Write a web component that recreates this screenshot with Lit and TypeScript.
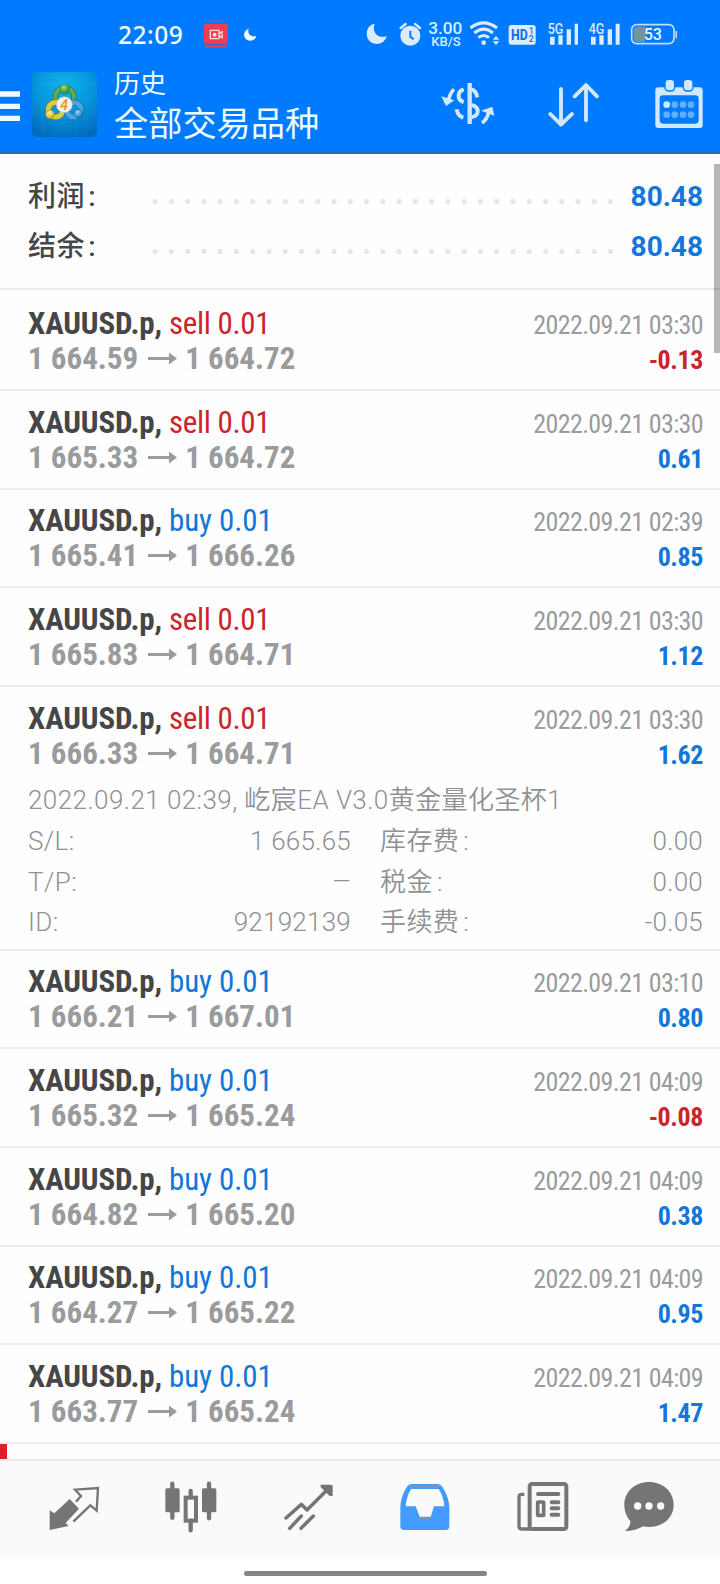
import { LitElement, html, svg, css, nothing } from "lit";
import { customElement, property } from "lit/decorators.js";

interface Trade {
  side: "sell" | "buy";
  open: string;
  close: string;
  time: string;
  profit: string;
  expanded?: boolean;
}

const TRADES: Trade[] = [
  { side: "sell", open: "1 664.59", close: "1 664.72", time: "2022.09.21 03:30", profit: "-0.13" },
  { side: "sell", open: "1 665.33", close: "1 664.72", time: "2022.09.21 03:30", profit: "0.61" },
  { side: "buy", open: "1 665.41", close: "1 666.26", time: "2022.09.21 02:39", profit: "0.85" },
  { side: "sell", open: "1 665.83", close: "1 664.71", time: "2022.09.21 03:30", profit: "1.12" },
  { side: "sell", open: "1 666.33", close: "1 664.71", time: "2022.09.21 03:30", profit: "1.62", expanded: true },
  { side: "buy", open: "1 666.21", close: "1 667.01", time: "2022.09.21 03:10", profit: "0.80" },
  { side: "buy", open: "1 665.32", close: "1 665.24", time: "2022.09.21 04:09", profit: "-0.08" },
  { side: "buy", open: "1 664.82", close: "1 665.20", time: "2022.09.21 04:09", profit: "0.38" },
  { side: "buy", open: "1 664.27", close: "1 665.22", time: "2022.09.21 04:09", profit: "0.95" },
  { side: "buy", open: "1 663.77", close: "1 665.24", time: "2022.09.21 04:09", profit: "1.47" },
];

/* Icons are drawn on a grid of three units per pixel. */
const icon = (x: number, y: number, w: number, h: number, body: unknown) => html`
  <svg width=${w / 3} height=${h / 3} viewBox="${x} ${y} ${w} ${h}" fill="none">${body}</svg>
`;

@customElement("status-bar")
class StatusBar extends LitElement {
  static styles = css`
    :host { display: flex; height: 30px; padding: 20px 43px 0 118px; color: #dcebff; font-family: Roboto, sans-serif; }
    svg { display: block; flex: none; }
    .time { width: 86px; font: 500 24.5px/29px "Noto Sans", sans-serif; letter-spacing: 0.5px; color: #f4faff; }
    .moon { margin-left: 16px; }
    .right { display: flex; margin-left: auto; gap: 7px; }
    .cell { display: block; margin-left: 2px; }
    .signal { margin-left: 1.300px; }
    text { font-family: Roboto, sans-serif; font-weight: 500; }
  `;
  signal(x: number, label: string) {
    return icon(x, 60, 98, 90, svg`
      <text x=${x + 5} y="101" font-size="43" fill="#dcebff" textLength="47" lengthAdjust="spacingAndGlyphs">${label}</text>
      <path fill="#dcebff" d="M${x + 12} 110h14v24h-14zM${x + 37} 106h13v28h-13zM${x + 62} 88h13v46h-13zM${x + 86} 71h12v63h-12z"/>`);
  }
  render() {
    return html`
      <span class="time">22:09</span>
      ${icon(612, 60, 72, 90, svg`
        <rect x="612" y="71" width="72" height="62" rx="8" fill="#ee3d52"/>
        <path d="M622 63h54" stroke="#8a60b0" stroke-width="3"/>
        <path d="M618 140h60" stroke="#ee3d52" stroke-width="5"/>
        <path d="M631 91h26v25h-26zM657 101l9-6v18l-9-6" stroke="#ffdce2" stroke-width="4"/>
        <circle cx="644" cy="104" r="6" fill="#ffdce2"/>`)}
      <span class="moon">${icon(734, 60, 38, 90, svg`<path fill="#f4faff" d="M748 86c-20 7-18 34 4 36 10 0 17-6 19-14-14 5-28-4-23-22z"/>`)}</span>
      <div class="right">
        ${icon(16, 60, 76, 90, svg`<path fill="#dcebff" d="M42 71C10 76 9 130 47 132c16 0 28-10 31-24-25 10-46-11-36-37z"/>`)}
        ${icon(113, 60, 66, 90, svg`
          <circle cx="147" cy="107" r="30" fill="#dcebff"/>
          <path d="M118 84l15-12M176 84l-15-12" stroke="#dcebff" stroke-width="7" stroke-linecap="round"/>
          <path d="M147 92v18l10 8" stroke="#007bff" stroke-width="6"/>`)}
        ${icon(199, 60, 105, 90, svg`
          <text x="200" y="103" font-size="47" fill="#dcebff" textLength="102" lengthAdjust="spacingAndGlyphs">3.00</text>
          <text x="209" y="138" font-size="38" fill="#dcebff" textLength="88" lengthAdjust="spacingAndGlyphs">KB/S</text>`)}
        ${icon(323, 60, 90, 90, svg`
          <path d="M324 84q40-31 80 0M336 99q28-23 56 0M348 113q16-13 32 0" stroke="#dcebff" stroke-width="9"/>
          <circle cx="364" cy="128" r="7" fill="#dcebff"/>
          <path d="M391 119l10-11 10 11zM391 124l10 11 10-11z" fill="#dcebff"/>`)}
        ${icon(436, 60, 92, 90, svg`
          <rect x="441" y="75" width="81" height="59" rx="8" fill="#dcebff"/>
          <text x="448" y="119" font-size="42" fill="#0870e0" style="font-weight:700" textLength="50" lengthAdjust="spacingAndGlyphs">HD</text>
          <text x="502" y="102" font-size="25" fill="#0870e0">1</text>
          <text x="501" y="127" font-size="27" fill="#0870e0">2</text>`)}
        <span class="cell signal">${this.signal(556, "5G")}</span>
        <span class="cell">${this.signal(685, "4G")}</span>
        <span class="cell">${icon(807, 60, 144, 90, svg`
          <rect x="815" y="74" width="127" height="57" rx="15" stroke="#c5dcf5" stroke-width="5"/>
          <path d="M832 80h23v46h-23q-11 0-11-11V91q0-11 11-11z" fill="#71949f"/>
          <path d="M949 93v22" stroke="#c5dcf5" stroke-width="5"/>
          <text x="851" y="121" font-size="50" fill="#eaf8ff" textLength="55" lengthAdjust="spacingAndGlyphs">53</text>`)}</span>
      </div>
    `;
  }
}

@customElement("tool-bar")
class ToolBar extends LitElement {
  static styles = css`
    :host { display: flex; height: 102px; color: #eefaff; font-family: Roboto, "Noto Sans CJK SC", sans-serif; }
    svg { display: block; flex: none; }
    .menu { padding-top: 20px; }
    .logo { padding: 20px 0 0 12px; }
    .titles { padding: 14.500px 0 0 17px; white-space: nowrap; flex: 1; }
    .small { font-size: 26px; line-height: 38px; }
    .big { font-size: 34.2px; line-height: 43px; }
    .actions { display: flex; padding: 20px 16px 0 0; gap: 53px; }
    .calendar { margin-left: 3px; }
  `;
  render() {
    return html`
      <div class="menu">${icon(0, 210, 60, 200, svg`<path d="M0 282h60M0 319h60M0 355h60" stroke="#eefaff" stroke-width="16"/>`)}</div>
      <div class="logo">${icon(96, 210, 195, 210, svg`
        <defs>
          <radialGradient id="bg" cx=".5" cy=".2" r=".85"><stop offset="0" stop-color="#10b4ea"/><stop offset=".5" stop-color="#0596dc"/><stop offset="1" stop-color="#0369bb"/></radialGradient>
          <radialGradient id="g" cx=".4" cy=".3" r=".7"><stop offset="0" stop-color="#a5dd7c"/><stop offset="1" stop-color="#248d35"/></radialGradient>
          <radialGradient id="y" cx=".4" cy=".3" r=".7"><stop offset="0" stop-color="#fff29a"/><stop offset="1" stop-color="#c5ad1c"/></radialGradient>
          <radialGradient id="b" cx=".4" cy=".3" r=".7"><stop offset="0" stop-color="#8fd6fa"/><stop offset="1" stop-color="#1575bd"/></radialGradient>
        </defs>
        <rect x="96" y="217" width="195" height="194" rx="14" fill="url(#bg)"/>
        <path d="M128 217v194M162 217v194M226 217v194M258 217v194M96 250h195M96 347h195M96 378h195" stroke="#3ab8ef" stroke-opacity=".18" stroke-width="2"/>
        <circle cx="194" cy="291" r="28" stroke="#2f7d3c" stroke-width="16"/>
        <circle cx="194" cy="291" r="28" stroke="#5fae55" stroke-width="11"/>
        <circle cx="167" cy="329" r="22" stroke="#94872a" stroke-width="18"/>
        <circle cx="167" cy="329" r="22" stroke="#dccb45" stroke-width="14"/>
        <circle cx="221" cy="329" r="22" stroke="#1f6fae" stroke-width="18"/>
        <circle cx="221" cy="329" r="22" stroke="#4ca6df" stroke-width="14"/>
        <circle cx="194" cy="267" r="14" fill="url(#g)" stroke="#287b32" stroke-width="2"/>
        <circle cx="150" cy="343" r="13" fill="url(#y)" stroke="#a08c18" stroke-width="2"/>
        <circle cx="235" cy="341" r="13" fill="url(#b)" stroke="#1d629c" stroke-width="2"/>
        <circle cx="193" cy="314" r="24" fill="#f4f1e8" stroke="#c0b89c" stroke-width="2"/>
        <text x="181" y="329" font-size="42" font-weight="500" font-family="Roboto" font-style="italic" fill="#e99028">4</text>`)}</div>
      <div class="titles">
        <div class="small">历史</div>
        <div class="big">全部交易品种</div>
      </div>
      <div class="actions">
        ${icon(242, 210, 162, 200, svg`
          <g stroke="#d2e8ff" stroke-width="12">
            <path d="M328 249v123" stroke-width="13"/>
            <path d="M332 268q14 2 19 24M332 315q21 3 20 21-2 13-20 16"/>
            <path d="M310 268q-15 5-15 19 0 15 15 19M289 328q3 20 20 25"/>
            <path d="M281 268q-11 9-16 30M365 369q15-10 20-33" stroke-width="11"/>
          </g>
          <path d="M243 289l39 12-25 17zM362 332l34-12 6 27z" fill="#d2e8ff"/>`)}
        ${icon(563, 210, 155, 200, svg`
          <path d="M602 267v107M570 342l32 32 33-32M677 361V257M643 289l34-34 33 34" stroke="#d2e8ff" stroke-width="11.500" stroke-linecap="round" stroke-linejoin="round"/>`)}
        <span class="calendar">${icon(886, 210, 146, 200, svg`
          <path fill-rule="evenodd" fill="#d2e8ff" d="M896 262h124q9 0 9 9v104q0 9-9 9H896q-9 0-9-9V271q0-9 9-9zm14 24q-10 0-10 10v65q0 10 10 10h97q10 0 10-10v-65q0-10-10-10z"/>
          <rect x="916" y="238" width="29" height="35" rx="11" fill="#d2e8ff" stroke="#007bff" stroke-width="4"/>
          <rect x="971" y="238" width="29" height="35" rx="11" fill="#d2e8ff" stroke="#007bff" stroke-width="4"/>
          <circle cx="921" cy="314" r="10" fill="#c5efff"/>
          ${[[945, 314], [970, 314], [994, 314], [921, 344], [945, 344], [970, 344], [994, 344]].map(
            ([cx, cy]) => svg`<circle cx=${cx} cy=${cy} r="10" fill="#60b0ff"/>`)}`)}</span>
      </div>
    `;
  }
}

@customElement("trade-row")
class TradeRow extends LitElement {
  @property({ attribute: false }) trade!: Trade;
  static styles = css`
    :host { display: block; box-sizing: border-box; height: 98.74px; padding: 13.700px 17px 0 28px; border-bottom: 2px solid #ededed; font-family: "Roboto Condensed", Roboto, "Noto Sans CJK SC", sans-serif; font-stretch: 75%; color: #999b9c; }
    :host([open]) { height: 263.5px; }
    .line { display: flex; justify-content: space-between; align-items: baseline; height: 35px; line-height: 35px; white-space: nowrap; }
    .symbol { font-size: 31px; font-weight: 700; letter-spacing: -0.15px; color: #444648; }
    .deal { font-weight: 400; letter-spacing: -0.32px; }
    .deal.buy { letter-spacing: -0.08px; }
    .sell, .minus { color: #c9252b; }
    .buy, .plus { color: #1277d8; }
    .date { font-size: 26px; letter-spacing: -0.63px; }
    .price { display: flex; font-size: 31px; font-weight: 700; }
    .arrow { display: block; margin: 0 8px 0 10px; }
    .profit { font-size: 26px; font-weight: 700; letter-spacing: -0.4px; }
    .details { margin-top: 9.300px; font: 350 26px/40.4px Roboto, "Noto Sans CJK SC", sans-serif; font-stretch: 100%; letter-spacing: 0.43px; color: #8f9193; }
    .comment { height: 41px; white-space: nowrap; }
    .grid { display: grid; grid-template-columns: 323px 323px; column-gap: 29px; }
    .cell { display: flex; justify-content: space-between; height: 40.5px; }
    .value { letter-spacing: 0.25px; }
    .dash { font-size: 23px; }
    .colon { margin-left: 4px; }
  `;
  details() {
    const cells = [["S/L", "1 665.65"], ["库存费", "0.00"], ["T/P", "—"], ["税金", "0.00"], ["ID", "92192139"], ["手续费", "-0.05"]];
    return html`<div class="details">
      <div class="comment">2022.09.21 02:39, 屹宸EA V3.0黄金量化圣杯1</div>
      <div class="grid">${cells.map(([k, v], i) => html`<div class="cell"><span>${k}<span class=${i % 2 ? "colon" : ""}>:</span></span><span class=${v === "—" ? "dash" : "value"}>${v}</span></div>`)}</div>
    </div>`;
  }
  render() {
    const t = this.trade;
    return html`
      <div class="line">
        <span class="symbol">XAUUSD.p, <span class="deal ${t.side}">${t.side} 0.01</span></span>
        <span class="date">${t.time}</span>
      </div>
      <div class="line">
        <span class="price">${t.open}<svg class="arrow" width="29" height="35" viewBox="0 0 29 35"><path d="M0 16h21V11.500l8 6-8 6v-4.500H0z" fill="#999b9c"/></svg>${t.close}</span>
        <span class="profit ${t.profit.startsWith("-") ? "minus" : "plus"}">${t.profit}</span>
      </div>
      ${t.expanded ? this.details() : nothing}
    `;
  }
}

@customElement("bottom-nav")
class BottomNav extends LitElement {
  static styles = css`
    :host { display: block; background: #fff; }
    .bar { display: flex; gap: 66.300px; box-sizing: border-box; height: 99.500px; padding: 18px 0 0 49px; border-top: 2.500px solid #e9e9e9; background: #fafafa; }
    .candles { margin: 0 1px 0 -1px; }
    .chat { margin-left: -10.700px; }
    .home { width: 243px; height: 5px; margin: 12.500px auto 0 244px; border-radius: 3px; background: #858585; }
    .bottom { height: 25.500px; display: flex; }
    svg { display: block; flex: none; }
  `;
  render() {
    return html`
      <div class="bar">
        ${icon(147, 180, 152, 165, svg`
          <path d="M149 274l14 9 46-43 28 29-40 43 9 9-57 12z" fill="#757575"/>
          <path d="M228 248l15-17-18-19 69-5-4 68-19-16-51 49" stroke="#757575" stroke-width="7"/>`)}
        <span class="candles">${icon(495, 180, 156, 165, svg`
          <path d="M517 194v102M627 194v104M572 216v18M572 305v29" stroke="#757575" stroke-width="13" stroke-linecap="round"/>
          <rect x="496" y="208" width="43" height="72" rx="5" fill="#757575"/>
          <rect x="606" y="208" width="43" height="72" rx="5" fill="#757575"/>
          <rect x="557" y="236" width="31" height="69" stroke="#757575" stroke-width="12"/>`)}</span>
        ${icon(850, 180, 149, 165, svg`
          <path d="M856 297l46-41 17 17 66-66M867 328l35-37M901 328l37-37" stroke="#757575" stroke-width="10.500" stroke-linecap="round" stroke-linejoin="round"/>
          <path d="M960 197h31q5 0 5 5v29h-9l-27-27z" fill="#757575"/>`)}
        ${icon(121, 180, 150, 165, svg`
          <path fill-rule="evenodd" fill="#449bff" d="M155 195h79q9 0 14 8 21 32 21 65v54q0 11-11 11H133q-11 0-11-11v-54q0-35 20-65 5-8 13-8zm-1 15q-13 21-16 52h30l12 31h33l10-31h31q-2-29-17-52z"/>
          <path d="M152 202h88M178 297h34" stroke="#7f96b0" stroke-width="6"/>`)}
        ${icon(470, 180, 156, 165, svg`
          <rect x="508" y="195" width="110" height="135" rx="7" stroke="#757575" stroke-width="12"/>
          <path d="M492 226h-8q-8 0-8 8v88q0 8 8 8h26" stroke="#757575" stroke-width="10"/>
          <path d="M533 225h61M574 250h20M574 268h20M574 287h20" stroke="#757575" stroke-width="12" stroke-linecap="round"/>
          <rect x="532" y="249" width="18" height="40" stroke="#757575" stroke-width="11" rx="2"/>`)}
        <span class="chat">${icon(793, 180, 151, 165, svg`
          <path fill="#757575" d="M868 189c42 0 74 29 74 68s-32 67-74 67q-10 0-18-2-21 14-55 14 18-12 17-30c-11-13-18-29-18-49 0-39 32-68 74-68z"/>
          <circle cx="834" cy="261" r="11" fill="#fafafa"/><circle cx="868" cy="261" r="11" fill="#fafafa"/><circle cx="903" cy="261" r="11" fill="#fafafa"/>`)}</span>
      </div>
      <div class="bottom"><div class="home"></div></div>
    `;
  }
}

@customElement("app-root")
class AppRoot extends LitElement {
  static styles = css`
    :host { display: flex; flex-direction: column; width: 720px; height: 1584px; overflow: hidden; background: #fefefe; }
    header { flex: none; height: 152px; background: #007bff; border-bottom: 2px solid #2b6aa6; }
    .main { position: relative; flex: 1; min-height: 0; overflow: hidden; }
    .summary { box-sizing: border-box; height: 136px; padding: 17.800px 17px 0 28px; border-bottom: 2px solid #ebebeb; margin-bottom: 2.100px; }
    .total { display: flex; height: 50.4px; line-height: 50.4px; font-family: Roboto, "Noto Sans CJK SC", sans-serif; font-size: 28px; font-weight: 500; color: #444648; }
    .label { width: 119px; letter-spacing: 0.6px; }
    .colon { margin-left: 3px; }
    .dots { width: 472px; height: 5px; margin-top: 27px; background: radial-gradient(circle at 8.100px 2.500px, #e6e6e6 2.300px, transparent 2.900px) 0 0 / 16.280px 5px repeat-x; }
    .sum { margin-left: auto; font-weight: 700; color: #1277d8; }
    .next { width: 7px; height: 16px; background: #dc2226; }
    .thumb { position: absolute; right: 0; top: 10px; width: 6px; height: 189px; background: rgba(0, 0, 0, 0.28); }
    bottom-nav { flex: none; }
  `;
  render() {
    return html`
      <header><status-bar></status-bar><tool-bar></tool-bar></header>
      <div class="main">
        <div class="summary">
          ${["利润", "结余"].map((l) => html`<div class="total"><span class="label">${l}<span class="colon">:</span></span><span class="dots"></span><span class="sum">80.48</span></div>`)}
        </div>
        ${TRADES.map((t) => html`<trade-row .trade=${t} ?open=${!!t.expanded}></trade-row>`)}
        <div class="next"></div>
        <div class="thumb"></div>
      </div>
      <bottom-nav></bottom-nav>
    `;
  }
}
